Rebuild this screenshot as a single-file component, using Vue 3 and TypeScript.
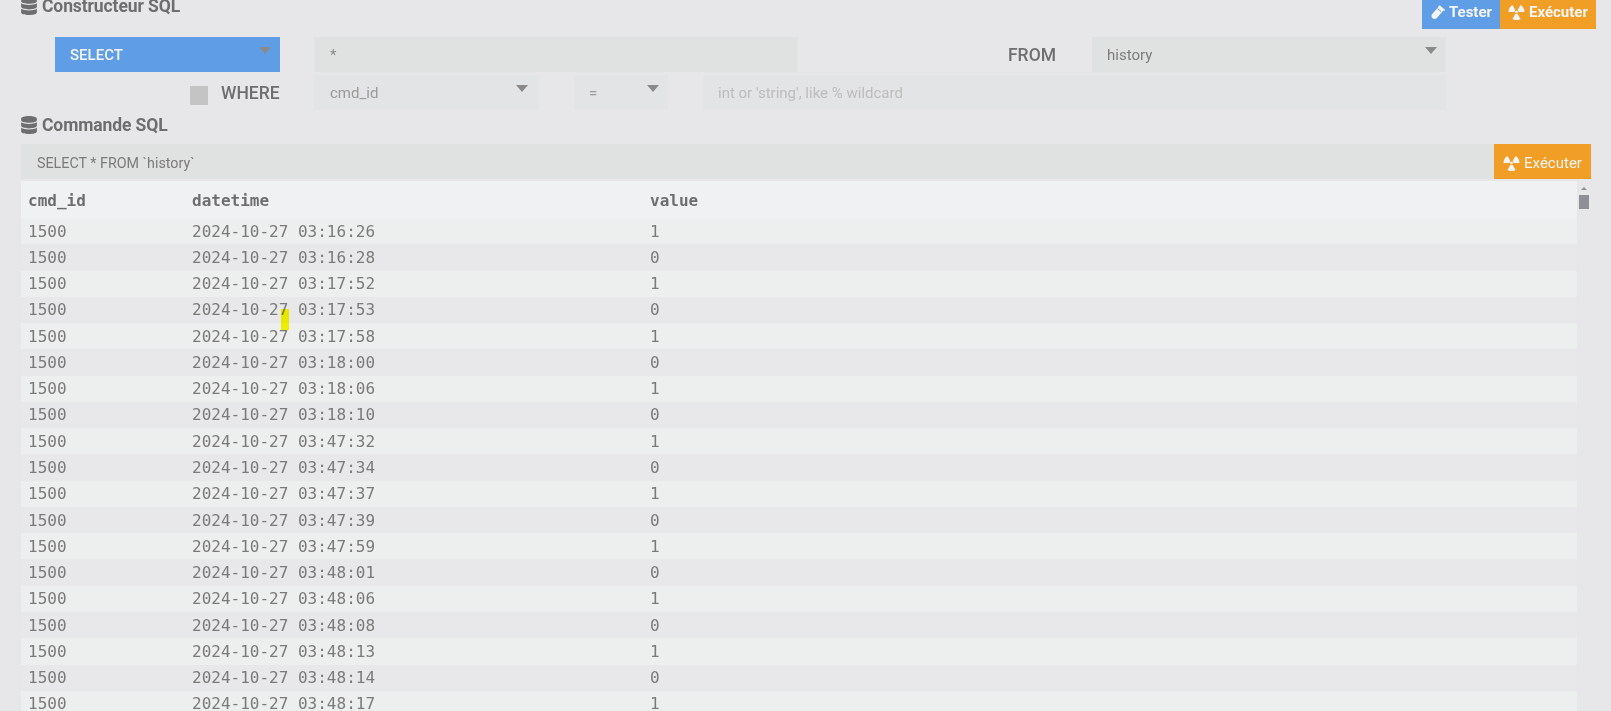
<script setup lang="ts">
const stamps: [string, number][] = [
  ['03:16:26', 1], ['03:16:28', 0], ['03:17:52', 1], ['03:17:53', 0], ['03:17:58', 1],
  ['03:18:00', 0], ['03:18:06', 1], ['03:18:10', 0], ['03:47:32', 1], ['03:47:34', 0],
  ['03:47:37', 1], ['03:47:39', 0], ['03:47:59', 1], ['03:48:01', 0], ['03:48:06', 1],
  ['03:48:08', 0], ['03:48:13', 1], ['03:48:14', 0], ['03:48:17', 1],
]
const dbPath = 'M448 73.143v45.714C448 159.143 347.667 192 224 192S0 159.143 0 118.857V73.143C0 32.857 100.333 0 224 0s224 32.857 224 73.143zM448 176v102.857C448 319.143 347.667 352 224 352S0 319.143 0 278.857V176c48.125 33.143 136.208 48.572 224 48.572S399.874 209.143 448 176zm0 160v102.857C448 479.143 347.667 512 224 512S0 479.143 0 438.857V336c48.125 33.143 136.208 48.572 224 48.572S399.874 369.143 448 336z'
const radPath = 'M1.3 2.25L5 8.66A10 10 0 0 1-5 8.66L-1.3 2.25A2.6 2.6 0 0 0 1.3 2.25ZM1.3-2.25L5-8.66A10 10 0 0 1 10 0L2.6 0A2.6 2.6 0 0 0 1.3-2.25ZM-2.6 0L-10 0A10 10 0 0 1-5-8.66L-1.3-2.25A2.6 2.6 0 0 0-2.6 0Z'
</script>

<template>
  <div class="page">
    <header class="top">
      <h2 class="title clipped">
        <svg class="db" viewBox="0 0 448 512"><path :d="dbPath" /></svg>Constructeur SQL
      </h2>
      <div class="actions">
        <button class="btn blue strong">
          <svg class="tube" viewBox="0 0 16 14"><path d="M10 .6l5.2 4.4-1 1.1-.8-.6-6.6 7.4c-1.1 1.2-3 1.3-4.2.3-1.3-1-1.5-3-.4-4.2l6.6-7.5-.8-.6z" /><path class="tube-gap" d="M7.6 3.6l3.6 3" /></svg>
          Tester
        </button>
        <button class="btn orange strong">
          <svg class="rad" viewBox="-10.5 -10 21 20"><path :d="radPath" /><circle r="1.7" /></svg>
          Exécuter
        </button>
      </div>
    </header>

    <section class="form">
      <div class="row first">
        <div class="select primary"><span>SELECT</span><i class="caret" /></div>
        <input class="field fields" value="*" />
        <label class="from">FROM</label>
        <div class="select table-select"><span>history</span><i class="caret" /></div>
      </div>
      <div class="row second">
        <span class="check" />
        <label class="where">WHERE</label>
        <div class="select col"><span>cmd_id</span><i class="caret" /></div>
        <div class="select op"><span>=</span><i class="caret" /></div>
        <input class="field value" placeholder="int or 'string', like % wildcard" />
      </div>
    </section>

    <h2 class="title cmd-title">
      <svg class="db" viewBox="0 0 448 512"><path :d="dbPath" /></svg>Commande SQL
    </h2>

    <div class="command">
      <input class="field sql" value="SELECT * FROM `history`" />
      <button class="btn orange run">
        <svg class="rad" viewBox="-10.5 -10 21 20"><path :d="radPath" /><circle r="1.7" /></svg>
        Exécuter
      </button>
    </div>

    <div class="results">
      <div class="grid">
        <div class="line head"><span>cmd_id</span><span>datetime</span><span>value</span></div>
        <div v-for="s in stamps" :key="s[0]" class="line">
          <span>1500</span><span>2024-10-27 {{ s[0] }}</span><span>{{ s[1] }}</span>
        </div>
        <span class="mark" />
      </div>
      <div class="scrollbar"><i class="up" /><i class="thumb" /></div>
    </div>
  </div>
</template>

<style>
html, body { overflow: hidden; background: #e7e7e9; }
</style>

<style scoped>
.page {
  width: 1611px;
  height: 711px;
  overflow: hidden;
  background: #e7e7e9;
  font-family: Roboto, "Liberation Sans", sans-serif;
  color: #707070;
}
.top { display: flex; justify-content: space-between; height: 29px; padding: 0 15px 0 21px; }
.title {
  display: flex;
  align-items: center;
  margin: 0;
  height: 22px;
  font-size: 17.5px;
  font-weight: 700;
  letter-spacing: -0.1px;
  color: #6e6e6e;
}
.clipped { margin-top: -5px; }
.db { width: 16px; height: 18px; margin-right: 5px; fill: #6e6e6e; }
.actions { display: flex; }
.btn {
  display: flex;
  align-items: center;
  justify-content: center;
  border: 0;
  padding: 0;
  color: #f5f5f5;
  font-family: inherit;
  font-size: 15px;
}
.strong { font-weight: 700; height: 29px; padding-bottom: 5px; }
.blue { width: 78px; background: #5f9ee6; }
.top .orange { width: 96px; background: #f19e27; }
.orange { background: #f19e27; }
.tube { width: 16px; height: 14px; margin-right: 3px; fill: #f5f5f5; }
.tube-gap { fill: none; stroke: #5f9ee6; stroke-width: 1; }
.rad { width: 17px; height: 16px; margin-right: 4px; fill: #f5f5f5; }

.form { margin-top: 8px; }
.row { display: flex; align-items: center; height: 35px; }
.first { padding-left: 55px; }
.second { margin-top: 3px; padding-left: 190px; }
.select {
  display: flex;
  justify-content: space-between;
  align-items: center;
  box-sizing: border-box;
  height: 35px;
  padding: 0 9px 0 15px;
  font-size: 15px;
}
.caret {
  align-self: flex-start;
  margin-top: 10px;
  width: 0;
  height: 0;
  border-left: 6.5px solid transparent;
  border-right: 6.5px solid transparent;
  border-top: 7px solid #8a8a8a;
}
.primary { width: 225px; background: #5f9ee6; color: #f4f4f4; font-weight: 500; }
.field {
  box-sizing: border-box;
  height: 35px;
  border: 0;
  outline: 0;
  padding: 0 16px;
  font-family: inherit;
  font-size: 15px;
  background: #e0e2e1;
  color: #8a8a8a;
}
.fields { width: 484px; margin-left: 34px; }
.from { width: 258px; text-align: right; font-size: 17.5px; font-weight: 500; color: #6e6e6e; }
.table-select { width: 354px; margin-left: 36px; background: #e0e2e1; color: #7c7c7c; }
.check { width: 18px; height: 19px; margin-top: 5px; background: #c4c4c4; }
.where { margin-left: 13px; font-size: 17.5px; font-weight: 500; color: #6e6e6e; width: 93px; }
.col { width: 225px; padding-left: 16px; background: #e3e4e5; color: #9a9a9a; padding-right: 11px; }
.op { width: 94px; margin-left: 35px; background: #e3e4e5; color: #9a9a9a; }
.value { width: 743px; margin-left: 35px; padding-left: 15px; background: #e3e4e5; }
.value::placeholder { color: #bcbcbc; opacity: 1; }

.cmd-title { margin: 4px 0 0 21px; }
.command { display: flex; height: 35px; margin: 8px 20px 0 21px; }
.sql { flex: 1; color: #7a7a7a; padding-top: 2px; font-size: 14.3px; }
.run { width: 97px; font-weight: 400; padding-top: 3px; }

.results { display: flex; margin: 2px 0 0 21px; }
.grid {
  position: relative;
  width: 1556px;
  font-family: "DejaVu Sans Mono", monospace;
  font-size: 16px;
  color: #7a7a7a;
}
.line {
  display: grid;
  grid-template-columns: 164px 458px 1fr;
  align-items: center;
  height: 26.27px;
  padding-left: 7px;
  background: #e8e8ea;
}
.line:nth-child(even) { background: #edefee; }
.head { box-sizing: border-box; height: 37px; padding-top: 2px; background: #eff1f3; font-weight: 700; color: #6e6e6e; }
.mark {
  position: absolute;
  left: 260px;
  top: 128px;
  width: 8px;
  height: 21px;
  background: #fefe00;
  mix-blend-mode: multiply;
}
.scrollbar { display: flex; flex-direction: column; align-items: center; width: 14px; }
.up {
  margin-top: 6px;
  width: 0;
  height: 0;
  border-left: 3px solid transparent;
  border-right: 3px solid transparent;
  border-bottom: 3px solid #8f8f96;
}
.thumb { margin-top: 5px; width: 10px; height: 14px; background: #8f8f96; }
</style>
